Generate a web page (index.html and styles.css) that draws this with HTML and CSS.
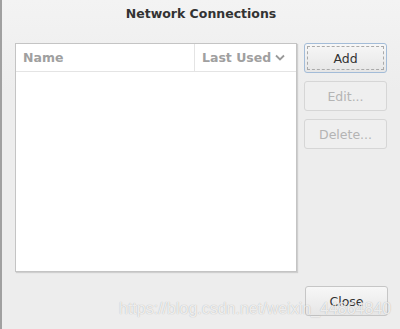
FILE: index.html
```html
<!DOCTYPE html>
<html>
<head>
  <title>Network Connections</title>
  <link rel="stylesheet" href="styles.css">
</head>
<body>
  <div class="window">
    <h1 class="title">Network Connections</h1>
    <div class="main">
      <div class="list">
        <div class="list-head">
          <div class="col-name">Name</div>
          <div class="col-used">Last Used
            <svg class="chev" width="10" height="7" viewBox="0 0 10 7"><path d="M1 1.5 L5 5.5 L9 1.5" fill="none" stroke="#999" stroke-width="1.8"/></svg>
          </div>
        </div>
      </div>
      <div class="side">
        <button class="btn focus"><span>Add</span></button>
        <button class="btn" disabled>Edit...</button>
        <button class="btn" disabled>Delete...</button>
        <button class="btn close">Close</button>
      </div>
    </div>
    <div class="mark">https://blog.csdn.net/weixin_44864840</div>
  </div>
</body>
</html>
```

FILE: styles.css
```css
body {
  margin: 0;
  font-family: "DejaVu Sans", sans-serif;
}

.window {
  width: 398px;
  height: 329px;
  border-left: 2px solid #a0a0a0;
  background: linear-gradient(#f3f3f3, #ededed 90px);
  position: relative;
  overflow: hidden;
}

.title {
  margin: 0;
  padding-top: 6px;
  height: 43px;
  box-sizing: border-box;
  text-align: center;
  font-size: 12.5px;
  font-weight: bold;
  color: #333;
}

.main {
  display: flex;
  padding-left: 13px;
}

.list {
  width: 280px;
  height: 227px;
  background: #fff;
  border: 1px solid #c4c4c4;
  box-shadow: 1px 1px 1px #cfcfcf;
}

.list-head {
  display: flex;
  height: 27px;
  border-bottom: 1px solid #e4e4e4;
  color: #a0a0a0;
  font-size: 12.5px;
  font-weight: bold;
}

.col-name {
  width: 171px;
  padding-left: 7px;
  line-height: 27px;
  border-right: 1px solid #e4e4e4;
}

.col-used {
  padding-left: 7px;
  line-height: 27px;
  display: flex;
  align-items: center;
  gap: 4px;
}

.side {
  display: flex;
  flex-direction: column;
  gap: 8px;
  margin-left: 7px;
}

.btn {
  width: 83px;
  height: 30px;
  padding: 0;
  border: 1px solid #c6c6c6;
  border-radius: 3px;
  background: linear-gradient(#f7f7f7, #e6e6e6);
  font-family: "DejaVu Sans", sans-serif;
  font-size: 12.5px;
  color: #333;
}

.btn:disabled {
  background: #efefef;
  border-color: #d6d6d6;
  color: #b4b4b4;
}

.btn.focus {
  border-color: #a3bcd8;
  padding: 2px;
}

.btn.focus span {
  display: block;
  height: 100%;
  line-height: 24px;
  border: 1px dashed #aaa;
  box-sizing: border-box;
}

.btn.close {
  margin-top: 129px;
  margin-left: 1px;
}

.mark {
  position: absolute;
  left: 117px;
  top: 300px;
  font-family: "Liberation Sans", Arial, sans-serif;
  font-size: 16px;
  color: rgba(255, 255, 255, 0.8);
  text-shadow: 0 0 1px rgba(0, 0, 0, 0.3);
  white-space: nowrap;
}
```
